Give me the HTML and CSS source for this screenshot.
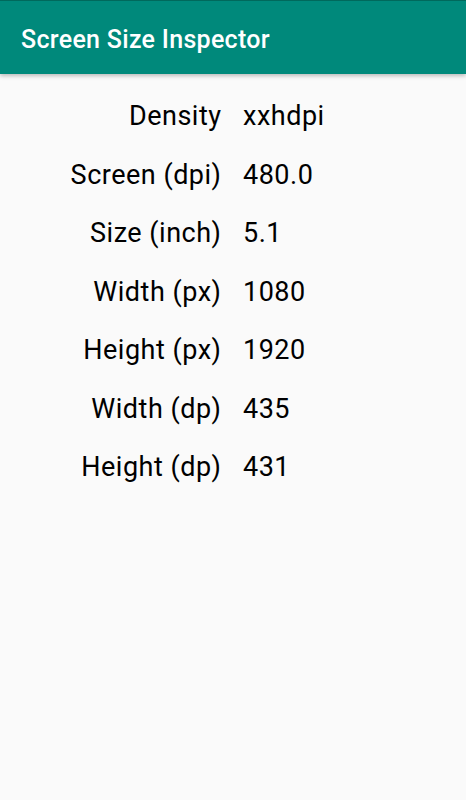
FILE: index.html
```html
<!DOCTYPE html>
<html>
  <head>
    <title>Screen Size Inspector</title>
    <link rel="stylesheet" href="styles.css">
  </head>
  <body>
    <div id="toolbar">Screen Size Inspector</div>

    <div id="infos">
      <div class="label">Density</div><div class="value">xxhdpi</div>
      <div class="label">Screen (dpi)</div><div class="value">480.0</div>
      <div class="label">Size (inch)</div><div class="value">5.1</div>
      <div class="label">Width (px)</div><div class="value">1080</div>
      <div class="label">Height (px)</div><div class="value">1920</div>
      <div class="label">Width (dp)</div><div class="value">435</div>
      <div class="label">Height (dp)</div><div class="value">431</div>
    </div>
  </body>
</html>
```

FILE: styles.css
```css
body { margin: 0; background-color: #fafafa; font-family: Roboto, "Noto Sans", sans-serif; color: #000; }

#toolbar {
  height: 74px;
  box-sizing: border-box;
  padding: 2px 21px 0 21px;
  line-height: 74px;
  background-color: #00897b;
  border-top: 1px solid #00695c;
  color: #fff;
  font-size: 25px;
  font-weight: 500;
  letter-spacing: 0.3px;
  box-shadow: 0 2px 4px rgba(0, 0, 0, 0.25);
}

#infos {
  display: grid;
  grid-template-columns: 221px auto;
  column-gap: 22px;
  padding-top: 13px;
  font-size: 27px;
  letter-spacing: 0.5px;
  line-height: 58.5px;
}

.label { text-align: right; margin-right: -0.5px; }
.value { text-align: left; }
```
